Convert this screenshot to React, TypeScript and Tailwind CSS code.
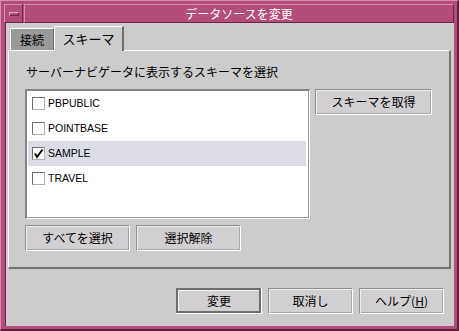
import React from "react";

const jp = { fontFamily: '"Noto Sans CJK JP", "DejaVu Sans", sans-serif' };
const lat = { fontFamily: '"Liberation Sans", Arial, sans-serif' };

function Btn({ children, className = "", def = false }: { children: React.ReactNode; className?: string; def?: boolean }) {
  if (def) {
    return (
      <div className={`flex border-r border-b border-white ${className}`}>
        <div className="flex-1 border-2 border-[#6e6e6e] flex">
          <div className="flex-1 flex items-center justify-center bg-[#d2cfd2] text-[12px] text-black border-t border-l border-[#f4f4f4]" style={jp}>
            {children}
          </div>
        </div>
      </div>
    );
  }
  return (
    <div
      className={`flex items-center justify-center bg-[#d2cfd2] text-[12px] text-black border-t border-l border-[#8f8f8f] border-r border-b border-r-white border-b-white shadow-[inset_1px_1px_0_#ececec,inset_-1px_-1px_0_#a8a8a8] ${className}`}
      style={jp}
    >
      {children}
    </div>
  );
}

function Check({ checked }: { checked?: boolean }) {
  return (
    <div className="w-[13px] h-[13px] bg-white border-t border-l border-[#6f6f6f] border-r border-b border-r-[#b0b0b0] border-b-[#b0b0b0] relative">
      {checked && (
        <svg width="11" height="11" viewBox="0 0 11 11" className="absolute left-0 top-0">
          <path d="M2 5.5 L4 9 L9.5 1.5" stroke="#000" strokeWidth="2" fill="none" />
        </svg>
      )}
    </div>
  );
}

export default function App() {
  const rows = [
    { name: "PBPUBLIC", checked: false, sel: false },
    { name: "POINTBASE", checked: false, sel: false },
    { name: "SAMPLE", checked: true, sel: true },
    { name: "TRAVEL", checked: false, sel: false },
  ];
  return (
    <div className="w-[459px] h-[331px] overflow-hidden bg-[#b34e7b] flex flex-col border-t border-l border-[#d98db1] border-r-2 border-b-2 border-r-[#5e1f3e] border-b-[#5e1f3e]">
      <div className="flex h-[19px] mt-[3px] ml-[3px] mr-[3px] gap-[1px]">
        <div className="w-[19px] h-[19px] border-t border-l border-[#d98db1] border-r border-b border-r-[#6d2448] border-b-[#6d2448] flex items-center justify-center">
          <div className="w-[10px] h-[4px] border-t border-l border-[#e7aac8] border-r border-b border-r-[#6d2448] border-b-[#6d2448]" />
        </div>
        <div className="flex-1 h-[19px] border-t border-l border-[#d98db1] border-r border-b border-r-[#6d2448] border-b-[#6d2448] flex items-center justify-center text-white text-[12px]" style={jp}>
          データソースを変更
        </div>
      </div>
      <div className="flex-1 ml-[4px] mr-[3px] mb-[3px] border-l border-[#6d2448] bg-[#cccccc] flex flex-col">
        <div className="flex items-end h-[27px] pl-[4px] relative z-10">
          <div className="w-[44px] h-[22px] bg-[#999999] border-t border-l border-white border-r border-r-[#6f6f6f] rounded-tl-[2px] flex items-center justify-center text-[12px] text-black" style={jp}>
            接続
          </div>
          <div className="w-[70px] h-[25px] bg-[#cccccc] border-t border-l border-white border-r-2 border-r-[#6f6f6f] rounded-tl-[2px] flex items-center justify-center text-[13px] text-black -mb-[1px] pb-[1px]" style={jp}>
            スキーマ
          </div>
        </div>
        <div className="ml-[2px] mr-[3px] h-[219px] border-t border-l border-white border-r-2 border-b-2 border-r-[#737373] border-b-[#737373] flex flex-col pl-[16px] pt-[13px]">
          <div className="text-[12px] text-black leading-[16px] pl-[1px]" style={jp}>
            サーバーナビゲータに表示するスキーマを選択
          </div>
          <div className="flex mt-[9px] gap-[5px]">
            <div className="w-[285px] h-[130px] bg-white border-t-2 border-l-2 border-[#858585] border-r border-b border-r-white border-b-white shadow-[inset_-1px_-1px_0_#9a9a9a] pl-[1px] pr-[3px]">
              {rows.map((r) => (
                <div key={r.name} className={`h-[25px] flex items-center pl-[4px] gap-[3px] ${r.sel ? "bg-[#dcdce6]" : ""}`}>
                  <Check checked={r.checked} />
                  <span className="text-[10.5px] text-black" style={lat}>{r.name}</span>
                </div>
              ))}
            </div>
            <Btn className="w-[117px] h-[26px]">スキーマを取得</Btn>
          </div>
          <div className="flex gap-[6px] mt-[6px]">
            <Btn className="w-[105px] h-[26px]">すべてを選択</Btn>
            <Btn className="w-[105px] h-[26px]">選択解除</Btn>
          </div>
        </div>
        <div className="flex justify-end gap-[6px] mt-[19px] pr-[10px]">
          <Btn def className="w-[86px] h-[26px]">変更</Btn>
          <Btn className="w-[85px] h-[26px]">取消し</Btn>
          <Btn className="w-[85px] h-[26px]">
            <span>ヘルプ(<span className="underline">H</span>)</span>
          </Btn>
        </div>
      </div>
    </div>
  );
}
